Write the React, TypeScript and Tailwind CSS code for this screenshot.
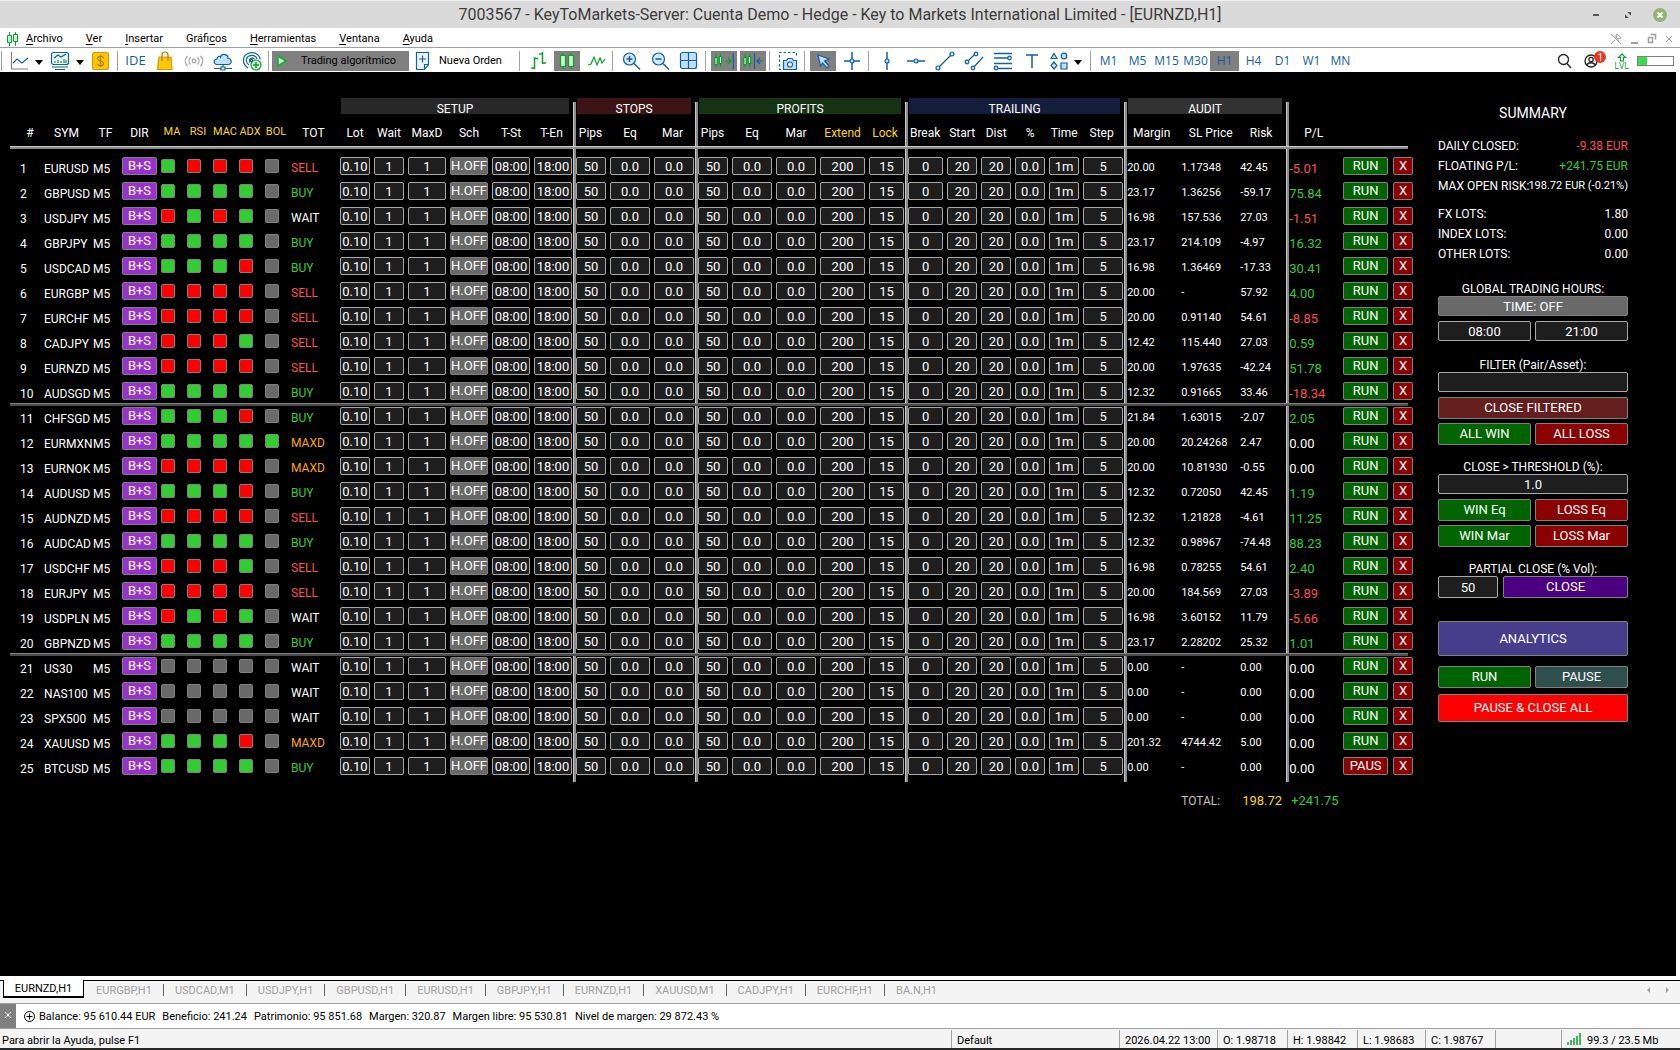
import clsx from "clsx";
import { Fragment, ReactNode } from "react";

type Row = [sym: string, lights: string, total: string, margin: string, sl: string, risk: string, pl: string];

// g = green, r = red, x = no signal (MA, RSI, MAC, ADX, BOL)
const rows: Row[] = [
    ["EURUSD", "grrrx", "SELL", "20.00", "1.17348", "42.45", "-5.01"],
    ["GBPUSD", "ggggx", "BUY", "23.17", "1.36256", "-59.17", "75.84"],
    ["USDJPY", "rgrgx", "WAIT", "16.98", "157.536", "27.03", "-1.51"],
    ["GBPJPY", "ggggx", "BUY", "23.17", "214.109", "-4.97", "16.32"],
    ["USDCAD", "gggrx", "BUY", "16.98", "1.36469", "-17.33", "30.41"],
    ["EURGBP", "rrrrx", "SELL", "20.00", "-", "57.92", "4.00"],
    ["EURCHF", "rrrrx", "SELL", "20.00", "0.91140", "54.61", "-8.85"],
    ["CADJPY", "rrrgx", "SELL", "12.42", "115.440", "27.03", "0.59"],
    ["EURNZD", "rrrrx", "SELL", "20.00", "1.97635", "-42.24", "51.78"],
    ["AUDSGD", "ggggx", "BUY", "12.32", "0.91665", "33.46", "-18.34"],
    ["CHFSGD", "gggrx", "BUY", "21.84", "1.63015", "-2.07", "2.05"],
    ["EURMXN", "ggggg", "MAXD", "20.00", "20.24268", "2.47", "0.00"],
    ["EURNOK", "rrrrx", "MAXD", "20.00", "10.81930", "-0.55", "0.00"],
    ["AUDUSD", "gggrx", "BUY", "12.32", "0.72050", "42.45", "1.19"],
    ["AUDNZD", "rrrrx", "SELL", "12.32", "1.21828", "-4.61", "11.25"],
    ["AUDCAD", "ggggx", "BUY", "12.32", "0.98967", "-74.48", "88.23"],
    ["USDCHF", "rrrgx", "SELL", "16.98", "0.78255", "54.61", "2.40"],
    ["EURJPY", "rrrrx", "SELL", "20.00", "184.569", "27.03", "-3.89"],
    ["USDPLN", "rgrgx", "WAIT", "16.98", "3.60152", "11.79", "-5.66"],
    ["GBPNZD", "ggggx", "BUY", "23.17", "2.28202", "25.32", "1.01"],
    ["US30", "xxxxx", "WAIT", "0.00", "-", "0.00", "0.00"],
    ["NAS100", "xxxxx", "WAIT", "0.00", "-", "0.00", "0.00"],
    ["SPX500", "xxxxx", "WAIT", "0.00", "-", "0.00", "0.00"],
    ["XAUUSD", "gggrx", "MAXD", "201.32", "4744.42", "5.00", "0.00"],
    ["BTCUSD", "ggggx", "BUY", "0.00", "-", "0.00", "0.00"],
];

// One entry for each column: header, column width, header colour, first of a group
const columns: { label: string; col: string; yellow?: boolean; small?: boolean; first?: boolean }[] = [
    { label: "#", col: "w-[34px]" },
    { label: "SYM", col: "w-[49px]" },
    { label: "TF", col: "w-[29px]" },
    { label: "DIR", col: "w-[39px]" },
    { label: "MA", col: "w-[26px]", yellow: true, small: true },
    { label: "RSI", col: "w-[26px]", yellow: true, small: true },
    { label: "MAC", col: "w-[26px]", yellow: true, small: true },
    { label: "ADX", col: "w-[26px]", yellow: true, small: true },
    { label: "BOL", col: "w-[26px]", yellow: true, small: true },
    { label: "TOT", col: "w-[49px]" },
    { label: "Lot", col: "w-[34px]" },
    { label: "Wait", col: "w-[34px]" },
    { label: "MaxD", col: "w-[42px]" },
    { label: "Sch", col: "w-[42px]" },
    { label: "T-St", col: "w-[42px]" },
    { label: "T-En", col: "w-[39px]" },
    { label: "Pips", col: "w-[37px]", first: true },
    { label: "Eq", col: "w-[44px]" },
    { label: "Mar", col: "w-[41px]" },
    { label: "Pips", col: "w-[37px]", first: true },
    { label: "Eq", col: "w-[44px]" },
    { label: "Mar", col: "w-[44px]" },
    { label: "Extend", col: "w-[49px]", yellow: true },
    { label: "Lock", col: "w-[36px]", yellow: true },
    { label: "Break", col: "w-[42px]", first: true },
    { label: "Start", col: "w-[34px]" },
    { label: "Dist", col: "w-[34px]" },
    { label: "%", col: "w-[34px]" },
    { label: "Time", col: "w-[34px]" },
    { label: "Step", col: "w-[41px]" },
    { label: "Margin", col: "w-[57px]", first: true },
    { label: "SL Price", col: "w-[59px]" },
    { label: "Risk", col: "w-[46px]" },
    { label: "P/L", col: "w-[57px]", first: true },
    { label: "", col: "w-[50px]" },
    { label: "", col: "w-[20px]" },
];

const settings: { name: string; value: string; width: string; first?: boolean; toggle?: boolean }[] = [
    { name: "Lot", value: "0.10", width: "w-[30px]" },
    { name: "Wait", value: "1", width: "w-[30px]" },
    { name: "MaxD", value: "1", width: "w-[38px]" },
    { name: "Schedule", value: "H.OFF", width: "w-[38px]", toggle: true },
    { name: "Time start", value: "08:00", width: "w-[38px]" },
    { name: "Time end", value: "18:00", width: "w-[38px]" },
    { name: "Stop pips", value: "50", width: "w-[30px]", first: true },
    { name: "Stop equity", value: "0.0", width: "w-[40px]" },
    { name: "Stop margin", value: "0.0", width: "w-[40px]" },
    { name: "Profit pips", value: "50", width: "w-[30px]", first: true },
    { name: "Profit equity", value: "0.0", width: "w-[40px]" },
    { name: "Profit margin", value: "0.0", width: "w-[40px]" },
    { name: "Extend", value: "200", width: "w-[45px]" },
    { name: "Lock", value: "15", width: "w-[35px]" },
    { name: "Break", value: "0", width: "w-[35px]", first: true },
    { name: "Trailing start", value: "20", width: "w-[30px]" },
    { name: "Distance", value: "20", width: "w-[30px]" },
    { name: "Percent", value: "0.0", width: "w-[30px]" },
    { name: "Time", value: "1m", width: "w-[30px]" },
    { name: "Step", value: "5", width: "w-[40px]" },
];

const bands = [
    { label: "SETUP", span: 6, color: "bg-[#282828]" },
    { label: "STOPS", span: 3, color: "bg-[#3c1414]", first: true },
    { label: "PROFITS", span: 5, color: "bg-[#143214]", first: true },
    { label: "TRAILING", span: 6, color: "bg-[#141e3c]", first: true },
    { label: "AUDIT", span: 3, color: "bg-[#323232]", first: true },
];

const lightColors: Record<string, string> = {
    g: "bg-[#32cd32]",
    r: "bg-[#ff0000]",
    x: "bg-[#696969]",
};

const totalColors: Record<string, string> = {
    BUY: "text-[#32cd32]",
    SELL: "text-[#ff4d4d]",
    MAXD: "text-[#ffa500]",
    WAIT: "text-white",
};

// Vertical rule on the left edge of a column group
const rule =
    "relative before:absolute before:left-0 before:top-0 before:-bottom-1 before:w-[3px] before:border-l before:border-[#c8c8c8] before:bg-[#8c8c8c]";
const headRule =
    "relative before:absolute before:left-0 before:top-1 before:bottom-0 before:w-[3px] before:border-l before:border-[#c8c8c8] before:bg-[#8c8c8c]";

const field = "relative block border border-[#a9a9a9] rounded-[2px] bg-[#1e1e1e] p-0 text-center text-[13px] text-white";
const btn = "relative block border border-[#808080] rounded-[2px] p-0 text-center text-[13px] text-white whitespace-nowrap";

const plColor = (value: string) =>
    value === "0.00" ? "text-white" : value.startsWith("-") ? "text-[#ff4d4d]" : "text-[#32cd32]";

function TitleBar() {
    return (
        <header className="relative flex h-7 items-center justify-center border-t border-[#f0f0f0] bg-[#dadada] text-[16px] text-[#3c3c3c]">
            <h1 className="leading-5">
                7003567 - KeyToMarkets-Server: Cuenta Demo - Hedge - Key to Markets International Limited - [EURNZD,H1]
            </h1>
            <div className="absolute right-3 top-1.5 flex items-center gap-4">
                <button type="button" aria-label="Minimizar" className="flex h-4 w-4 items-center justify-center">
                    <span className="h-0.5 w-1.5 bg-[#555]" />
                </button>
                <button type="button" aria-label="Restaurar" className="flex h-4 w-4 items-center justify-center">
                    <svg width="6" height="6" viewBox="0 0 8 8" fill="#555">
                        <path d="M3 0h5v5zM0 3v5h5z" />
                    </svg>
                </button>
                <button type="button" aria-label="Cerrar" className="h-4 w-4">
                    <svg width="16" height="16" viewBox="0 0 16 16">
                        <circle cx="8" cy="8" r="7" fill="#92b372" />
                        <path d="M5.5 5.5l5 5m0-5l-5 5" stroke="#fff" strokeWidth="2" />
                    </svg>
                </button>
            </div>
        </header>
    );
}

const menu: [string, number][] = [
    ["Archivo", 0],
    ["Ver", 0],
    ["Insertar", 0],
    ["Gráficos", 5],
    ["Herramientas", 0],
    ["Ventana", 0],
    ["Ayuda", 0],
];

function MenuBar() {
    return (
        <nav className="flex h-5 items-center border-b border-[#a0a0a0] bg-white pl-[7px] pr-1.5 pt-[3px] text-[11px] text-black">
            <svg width="12" height="14" viewBox="0 0 12 14" fill="#c8f5cf" stroke="#0ba02c" className="mr-[7px]">
                <path d="M2.5 0v14M8.5 0v14" />
                <path d="M.5 3.5h4v7h-4zM6.5 2.5h4v7h-4z" />
            </svg>
            <div className="flex flex-1 gap-[23px]">
                {menu.map(([label, key]) => (
                    <button key={label} type="button" className="leading-4">
                        {label.slice(0, key)}
                        <span className="underline underline-offset-2">{label[key]}</span>
                        {label.slice(key + 1)}
                    </button>
                ))}
            </div>
            <svg width="64" height="12" viewBox="0 0 64 12" fill="none" stroke="#a0a0a0">
                <path d="M1 1l10 10M1 11l4-4M5 3l4 5M7 1l4 4-3 1-2-3z" />
                <path d="M21 10h7" strokeWidth="2" />
                <path d="M40.5 1.5h5v5M38.5 4.5h4v5h-4z" strokeWidth="1.5" />
                <path d="M56 3l6 6m0-6l-6 6" />
            </svg>
        </nav>
    );
}

function Sep() {
    return <span className="ml-0.5 mr-[3px] h-5 w-px shrink-0 bg-[#a0a0a0]" />;
}

function Tool({ label, active, children }: { label: string; active?: boolean; children: ReactNode }) {
    return (
        <button type="button" aria-label={label} className="flex w-[29px] shrink-0 items-center justify-center">
            <span className={clsx("flex h-5 w-[26px] items-center justify-center", active && "bg-[#808080]")}>
                {children}
            </span>
        </button>
    );
}

function Icon({ children, green, w = 20 }: { children: ReactNode; green?: boolean; w?: number }) {
    return (
        <svg
            width={w}
            height="20"
            viewBox={`0 0 ${w} 20`}
            fill="none"
            stroke={green ? "#0ba02c" : "#13609f"}
            strokeWidth="1.2"
            className="shrink-0"
        >
            {children}
        </svg>
    );
}

function Caret() {
    return (
        <svg width="12" height="20" viewBox="0 0 12 20" className="shrink-0">
            <path d="M2 9h8L6 14z" fill="#000" />
        </svg>
    );
}

const periods = ["M1", "M5", "M15", "M30", "H1", "H4", "D1", "W1", "MN"];

function Toolbar() {
    return (
        <div className="flex h-6 items-center bg-white pt-0.5 font-['Open_Sans',sans-serif] text-[13px] text-[#13609f]">
            <span className="mr-0.5 h-5 w-0.5 shrink-0 border-r border-[#a0a0a0]" />
            <Tool label="Gráfico">
                <Icon>
                    <path d="M2.5 1v17H19" stroke="#808080" />
                    <path d="M4 12l4-4 5 4 6-5" />
                </Icon>
            </Tool>
            <Caret />
            <Tool label="Indicadores">
                <Icon>
                    <rect x="1.5" y="1.5" width="17" height="12" rx="2" fill="#eaf5ff" />
                    <path d="M4 7l4-3 3 2 5-3" />
                    <path d="M5 12v-2m3 2V9m3 3v-2m3 2V8m2 4V9" stroke="#0ba02c" />
                    <path d="M2 16h16M5 18.5h10" />
                </Icon>
            </Tool>
            <Caret />
            <Tool label="Símbolos">
                <Icon>
                    <rect x="1.5" y="1.5" width="16" height="17" rx="2" fill="#ffc800" stroke="#d39a10" />
                    <path
                        d="M12.5 7.5c0-3-6-3-6 0s6 2 6 5-6 3-6 0M9.5 4v12"
                        stroke="#b87a00"
                        strokeWidth="1.2"
                    />
                </Icon>
            </Tool>
            <Sep />
            <button type="button" className="w-[29px] text-center">
                IDE
            </button>
            <Tool label="Mercado">
                <Icon>
                    <path d="M4 6h12l1 12.5H2.5z" fill="#ffc800" stroke="#d39a10" />
                    <path d="M7 10V4c0-4 6-4 6 0v6" stroke="#b87a00" />
                </Icon>
            </Tool>
            <Tool label="Señales">
                <Icon>
                    <g stroke="#a0a0a0">
                        <circle cx="10" cy="10" r="1.8" />
                        <path d="M6.5 6.5c-2 2-2 5 0 7M13.5 6.5c2 2 2 5 0 7M3.5 5c-3 3-3 7 0 10M16.5 5c3 3 3 7 0 10" />
                    </g>
                </Icon>
            </Tool>
            <Tool label="VPS">
                <Icon>
                    <path
                        d="M5 13.5c-5 0-5-5-1-5.5 0-3 3-3 3.5-2 1-4 8-3 7.5 1.5 4 0 4.5 6 0 6z"
                        fill="#bfe0fb"
                    />
                    <path d="M10 13.5V16M1 17.5h7M12 17.5h7M8 16h4v3H8z" />
                </Icon>
            </Tool>
            <Tool label="Comunidad">
                <Icon>
                    <path d="M6 17C0 13 0 5 6 2.5s12 1 12 6M7 14c-4-3-3-8 0-9s7-1 8 3M8 11.5c-2-4 3-6 4.5-3" />
                    <circle cx="9.5" cy="9.5" r="1.2" />
                    <circle cx="14" cy="14" r="5" fill="#d9f8de" stroke="#0ba02c" />
                    <path d="M14 11v6m-3-3h6" stroke="#0ba02c" strokeWidth="1.5" />
                </Icon>
            </Tool>
            <Sep />
            <button
                type="button"
                className="flex h-5 w-[137px] shrink-0 items-center gap-3 bg-[#808080] pl-[3px] font-[Roboto,sans-serif] text-[11px] text-black"
            >
                <svg width="14" height="14" viewBox="0 0 14 14" fill="#c8f5cf" stroke="#0bb02c" strokeWidth="1.5">
                    <path d="M3 2l8 5-8 5z" />
                </svg>
                Trading algorítmico
            </button>
            <button
                type="button"
                className="flex w-[108px] shrink-0 items-center gap-1.5 pl-1 font-[Roboto,sans-serif] text-[11px] text-black"
            >
                <Icon>
                    <path d="M3.5 1.5h12v12l-4 5h-8z" fill="#eaf5ff" />
                    <path d="M15.5 13.5h-4v5M9.5 4.5v7M6 8h7" />
                </Icon>
                Nueva Orden
            </button>
            <Sep />
            <Tool label="Barras">
                <Icon green>
                    <path d="M6.5 6v12M3 17h3.5M6.5 7.5H10M14.5 1v12M11 3h3.5M14.5 12H18" strokeWidth="1.5" />
                </Icon>
            </Tool>
            <Tool label="Velas" active>
                <Icon green>
                    <path d="M6 2v16M14 2v16" />
                    <path d="M3.5 4.5h5v11h-5zM11.5 4.5h5v11h-5z" fill="#c8f5cf" />
                </Icon>
            </Tool>
            <Tool label="Línea">
                <Icon green>
                    <path d="M2 14l3-1 3-7 3 8 3-7 2 5 3-4" />
                </Icon>
            </Tool>
            <Sep />
            {["Acercar", "Alejar"].map((label) => (
                <Tool key={label} label={label}>
                    <Icon>
                        <circle cx="8.5" cy="8" r="6" fill="#cfe8fc" />
                        <path d="M13 12.5l6 6M5.5 8h6" strokeWidth="1.5" />
                        {label === "Acercar" && <path d="M8.5 5v6" strokeWidth="1.5" />}
                    </Icon>
                </Tool>
            ))}
            <Tool label="Mosaico">
                <Icon>
                    <rect x="1.5" y="1.5" width="16" height="16" rx="2" fill="#bfe0fb" />
                    <path d="M9.5 2v15M2 9.5h15" />
                </Icon>
            </Tool>
            <Sep />
            <Tool label="Desplazamiento automático" active>
                <Icon>
                    <g stroke="#0ba02c">
                        <path d="M2 3v13M6.5 3v13M11 10h6M14 7l3 3-3 3" />
                        <path d="M.8 6.5h2.4v7H.8zM5.3 5.5h2.4v7H5.3z" fill="#c8f5cf" />
                    </g>
                    <path d="M19.3 2v16" />
                </Icon>
            </Tool>
            <Tool label="Desplazar gráfico" active>
                <Icon>
                    <g stroke="#0ba02c">
                        <path d="M2 3v13M6.5 3v13" />
                        <path d="M.8 6.5h2.4v7H.8zM5.3 5.5h2.4v7H5.3z" fill="#c8f5cf" />
                    </g>
                    <path d="M11.5 2v16M14 10h6M17 7l-3 3 3 3" />
                </Icon>
            </Tool>
            <Sep />
            <Tool label="Captura">
                <Icon>
                    <path d="M3 18.5H1.5v-17h17V6" strokeDasharray="2.5 2" />
                    <path d="M5.5 9.5h3l1.5-2h4l1.5 2h3v9h-13z" fill="#bfe0fb" />
                    <circle cx="12" cy="13.5" r="2.5" fill="#fff" />
                </Icon>
            </Tool>
            <Sep />
            <Tool label="Cursor" active>
                <Icon>
                    <path d="M5 4l11 4-4.5 2 4.5 5-2 2-4.5-5L7.5 15z" fill="#bfe0fb" />
                </Icon>
            </Tool>
            <Tool label="Cruz">
                <Icon>
                    <path d="M10 1v18M2 10h16" strokeWidth="1.5" />
                    <circle cx="10" cy="10" r="2" fill="#bfe0fb" />
                </Icon>
            </Tool>
            <Sep />
            <Tool label="Línea vertical">
                <Icon>
                    <path d="M10 1v18" strokeWidth="1.5" />
                    <circle cx="10" cy="10" r="2" fill="#bfe0fb" />
                </Icon>
            </Tool>
            <Tool label="Línea horizontal">
                <Icon>
                    <path d="M1 10h18" strokeWidth="1.5" />
                    <circle cx="10" cy="10" r="2" fill="#bfe0fb" />
                </Icon>
            </Tool>
            <Tool label="Línea de tendencia">
                <Icon>
                    <path d="M3 17L17 3" />
                    <circle cx="3" cy="17" r="2" fill="#bfe0fb" />
                    <circle cx="17" cy="3" r="2" fill="#bfe0fb" />
                </Icon>
            </Tool>
            <Tool label="Canal">
                <Icon>
                    <path d="M3 11l9-9M9 17L19 6" />
                    <circle cx="3" cy="11" r="1.8" fill="#bfe0fb" />
                    <circle cx="12" cy="3" r="1.8" fill="#bfe0fb" />
                    <circle cx="9" cy="17" r="1.8" fill="#bfe0fb" />
                </Icon>
            </Tool>
            <Tool label="Fibonacci">
                <Icon>
                    <path d="M1 2.5h18M1 7h14M1 12.5h18M5 17.5h14" strokeWidth="1.5" />
                    <circle cx="16.5" cy="7" r="1.8" fill="#bfe0fb" />
                    <circle cx="3" cy="17" r="1.8" fill="#bfe0fb" />
                </Icon>
            </Tool>
            <Tool label="Texto">
                <Icon>
                    <path d="M4 4h12M10 4v13" strokeWidth="1.5" />
                </Icon>
            </Tool>
            <button type="button" aria-label="Objetos" className="flex w-[42px] shrink-0 items-center gap-1 pl-1">
                <Icon w={18}>
                    <path d="M4 2.5l3 5H1zM1 14.5l3-3.500 3 3.500L4 18zM11 12h6v6h-6z" fill="#bfe0fb" />
                    <circle cx="14" cy="5" r="2.8" fill="#bfe0fb" />
                </Icon>
                <Caret />
            </button>
            <Sep />
            {periods.map((period) => (
                <button
                    key={period}
                    type="button"
                    className={clsx("h-5 w-[29px] shrink-0 text-[12px]", period === "H1" && "bg-[#808080]")}
                >
                    {period}
                </button>
            ))}
            <div className="ml-auto flex items-center gap-3 pr-1.5">
                <button type="button" aria-label="Buscar">
                    <svg width="15" height="16" viewBox="0 0 15 16" fill="none" stroke="#222" strokeWidth="1.3">
                        <circle cx="6.5" cy="6.5" r="5" />
                        <path d="M10 10.5l4 4.5" />
                    </svg>
                </button>
                <button type="button" aria-label="Perfil" className="relative">
                    <svg width="22" height="16" viewBox="0 0 22 16" fill="none" stroke="#222" strokeWidth="1.3">
                        <circle cx="7" cy="8" r="6" />
                        <circle cx="7" cy="6.5" r="2.2" />
                        <path d="M3 12c1-3 7-3 8 0" />
                    </svg>
                    <span className="absolute -top-0.5 right-0 h-3 w-3 rounded-full bg-[#e03a20] text-center text-[10px] leading-3 text-white">
                        1
                    </span>
                </button>
                <div className="-ml-1 flex flex-col items-center text-[9px] leading-2 text-[#0ba02c]">
                    <svg width="10" height="9" viewBox="0 0 10 9" fill="none" stroke="#0ba02c" strokeWidth="1.2">
                        <path d="M5 1l3.5 3.5h-2V8h-3V4.5h-2z" />
                    </svg>
                    LVL
                </div>
                <div className="-ml-1 h-2.5 w-[37px] border border-[#808080] bg-white">
                    <div className="h-full w-[9px] bg-[#3cdc46]" />
                </div>
            </div>
        </div>
    );
}

function SignalTable() {
    return (
        <table className="w-[1403px] shrink-0 table-fixed border-separate border-spacing-0 self-start text-white">
            <colgroup>
                {columns.map((c, i) => (
                    <col key={i} className={c.col} />
                ))}
            </colgroup>
            <thead className="text-[12px]">
                <tr className="h-4">
                    <td colSpan={10} />
                    {bands.map((band) => (
                        <th
                            key={band.label}
                            colSpan={band.span}
                            className={clsx("p-0 pr-1 font-normal", band.first ? ["pl-1", headRule] : "pl-px")}
                        >
                            <div className={clsx("h-4 leading-[22px]", band.color)}>{band.label}</div>
                        </th>
                    ))}
                    <td colSpan={3} className={headRule} />
                </tr>
                <tr className="relative h-[39px] after:absolute after:bottom-1 after:left-0 after:right-[5px] after:h-[3px] after:border-t after:border-[#c8c8c8] after:bg-[#8c8c8c]">
                    {columns.map((c, i) => (
                        <th
                            key={i}
                            className={clsx(
                                "whitespace-nowrap p-0 pb-0.5 font-normal",
                                i === 0 && "pl-2.5",
                                i !== 31 && !c.first && "pr-1",
                                c.first && "pr-0.5",
                                c.yellow && "text-[#ffd700]",
                                c.small && "text-[11px]",
                                c.first && rule
                            )}
                        >
                            {c.label}
                        </th>
                    ))}
                </tr>
            </thead>
            <tbody>
                {rows.map(([sym, lights, total, margin, sl, risk, pl], index) => (
                    <tr
                        key={sym}
                        className={clsx(
                            "relative h-[25px] align-top leading-[18px]",
                            (index === 10 || index === 20) &&
                                "after:absolute after:left-0 after:right-[5px] after:top-0 after:h-[3px] after:border-t after:border-[#808080] after:bg-[#4b4b4b]"
                        )}
                    >
                        <td className="p-0 pl-2.5 pt-[7px] text-[12px]">{index + 1}</td>
                        <td className="whitespace-nowrap p-0 pt-[7px] text-[12px]">{sym}</td>
                        <td className="p-0 pt-[7px] text-[12px]">M5</td>
                        <td className="p-0 pt-1">
                            <button type="button" className={clsx(btn, "h-[18px] w-[35px] bg-[#9932cc] leading-4")}>
                                B+S
                            </button>
                        </td>
                        {lights.split("").map((light, i) => (
                            <td key={i} className="p-0 pt-1.5">
                                <span
                                    className={clsx(
                                        "block h-3.5 w-3.5 rounded-[2px] border border-[#808080]",
                                        lightColors[light]
                                    )}
                                />
                            </td>
                        ))}
                        <td className={clsx("p-0 pt-1.5 text-[12px]", totalColors[total])}>{total}</td>
                        {settings.map((s) => (
                            <td key={s.name} className={clsx("p-0 pt-1", s.first && ["pl-[3px]", rule])}>
                                {s.toggle ? (
                                    <button
                                        type="button"
                                        className={clsx(btn, s.width, "h-[18px] bg-[#696969] leading-4")}
                                    >
                                        {s.value}
                                    </button>
                                ) : (
                                    <input
                                        aria-label={`${sym} ${s.name}`}
                                        defaultValue={s.value}
                                        className={clsx(field, s.width, "h-[18px] leading-4")}
                                    />
                                )}
                            </td>
                        ))}
                        <td className={clsx("p-0 pl-[3px] pt-1.5 text-[11px]", rule)}>{margin}</td>
                        <td className="p-0 pt-1.5 text-[11px]">{sl}</td>
                        <td className="p-0 pt-1.5 text-[11px]">{risk}</td>
                        <td className={clsx("p-0 pl-[3px] pt-[7px] text-[13px]", rule, plColor(pl))}>{pl}</td>
                        <td className="p-0 pt-1">
                            <button
                                type="button"
                                className={clsx(
                                    btn,
                                    "h-[18px] w-[45px] leading-4",
                                    sym === "BTCUSD" ? "bg-[#8b0000]" : "bg-[#006400]"
                                )}
                            >
                                {sym === "BTCUSD" ? "PAUS" : "RUN"}
                            </button>
                        </td>
                        <td className="p-0 pt-1">
                            <button type="button" className={clsx(btn, "h-[18px] w-5 bg-[#8b0000] leading-4")}>
                                X
                            </button>
                        </td>
                    </tr>
                ))}
            </tbody>
            <tfoot>
                <tr className="h-[46px] text-[13px]">
                    <td colSpan={31} />
                    <td className="p-0 text-[12px] text-[#c0c0c0]">TOTAL:</td>
                    <td className="p-0 pl-0.5 text-[#ffd700]">198.72</td>
                    <td className="p-0 pl-[5px] text-[#32cd32]">+241.75</td>
                    <td colSpan={2} />
                </tr>
            </tfoot>
        </table>
    );
}

const half = "flex-1 h-[22px]";

function Summary() {
    return (
        <aside className="mr-12 w-[190px] text-[12px] text-white">
            <h2 className="pt-[5px] text-center text-[14px] leading-5">SUMMARY</h2>
            <dl className="mt-[13px] leading-5">
                {[
                    ["DAILY CLOSED:", "-9.38 EUR", "text-[#ff4d4d]"],
                    ["FLOATING P/L:", "+241.75 EUR", "text-[#32cd32]"],
                    ["MAX OPEN RISK:", "198.72 EUR (-0.21%)", "text-[11px]"],
                    ["FX LOTS:", "1.80", ""],
                    ["INDEX LOTS:", "0.00", ""],
                    ["OTHER LOTS:", "0.00", ""],
                ].map(([label, value, color], i) => (
                    <div key={label} className={clsx("flex justify-between whitespace-nowrap", i === 3 && "mt-2")}>
                        <dt className="w-0">{label}</dt>
                        <dd className={color}>{value}</dd>
                    </div>
                ))}
            </dl>

            <h3 className="mt-4 h-4 text-center leading-[18px]">GLOBAL TRADING HOURS:</h3>
            <button type="button" className={clsx(btn, "h-5 w-full bg-[#696969] leading-[19px]")}>
                TIME: OFF
            </button>
            <div className="mt-[5px] flex gap-1">
                <input aria-label="Start" defaultValue="08:00" className={clsx(field, "h-5 w-0 flex-1")} />
                <input aria-label="End" defaultValue="21:00" className={clsx(field, "h-5 w-0 flex-1")} />
            </div>

            <label htmlFor="filter" className="mt-[15px] block h-4 text-center leading-[18px]">
                FILTER (Pair/Asset):
            </label>
            <input id="filter" className={clsx(field, "h-5 w-full")} />
            <button type="button" className={clsx(btn, "mt-[5px] h-[22px] w-full bg-[#641e1e]")}>
                CLOSE FILTERED
            </button>
            <div className="mt-1 flex gap-1">
                <button type="button" className={clsx(btn, half, "bg-[#006400]")}>
                    ALL WIN
                </button>
                <button type="button" className={clsx(btn, half, "bg-[#8b0000]")}>
                    ALL LOSS
                </button>
            </div>

            <label htmlFor="threshold" className="mt-[13px] block h-4 text-center leading-[18px]">
                CLOSE &gt; THRESHOLD (%):
            </label>
            <input id="threshold" defaultValue="1.0" className={clsx(field, "h-5 w-full")} />
            <div className="mt-[5px] grid grid-cols-2 gap-1">
                <button type="button" className={clsx(btn, "h-[22px] bg-[#006400]")}>
                    WIN Eq
                </button>
                <button type="button" className={clsx(btn, "h-[22px] bg-[#8b0000]")}>
                    LOSS Eq
                </button>
                <button type="button" className={clsx(btn, "h-[22px] bg-[#006400]")}>
                    WIN Mar
                </button>
                <button type="button" className={clsx(btn, "h-[22px] bg-[#8b0000]")}>
                    LOSS Mar
                </button>
            </div>

            <label htmlFor="partial" className="mt-[13px] block h-4 text-center leading-[18px]">
                PARTIAL CLOSE (% Vol):
            </label>
            <div className="flex gap-[5px]">
                <input id="partial" defaultValue="50" className={clsx(field, "h-[22px] w-[60px]")} />
                <button type="button" className={clsx(btn, half, "bg-[#4b0082]")}>
                    CLOSE
                </button>
            </div>

            <button type="button" className={clsx(btn, "mt-[23px] h-[35px] w-full bg-[#483d8b]")}>
                ANALYTICS
            </button>
            <div className="mt-2.5 flex gap-1">
                <button type="button" className={clsx(btn, half, "bg-[#006400]")}>
                    RUN
                </button>
                <button type="button" className={clsx(btn, half, "bg-[#2f4f4f]")}>
                    PAUSE
                </button>
            </div>
            <button type="button" className={clsx(btn, "mt-1.5 h-7 w-full bg-[#ff0000]")}>
                PAUSE &amp; CLOSE ALL
            </button>
        </aside>
    );
}

const tabs = [
    "EURGBP,H1",
    "USDCAD,M1",
    "USDJPY,H1",
    "GBPUSD,H1",
    "EURUSD,H1",
    "GBPJPY,H1",
    "EURNZD,H1",
    "XAUUSD,M1",
    "CADJPY,H1",
    "EURCHF,H1",
    "BA.N,H1",
];

function ChartTabs() {
    return (
        <div className="flex h-6 items-start border-b border-t border-b-[#a0a0a0] border-t-black bg-[#f4f4f4] text-[11px] text-[#a0a0a0]">
            <button
                type="button"
                className="-mt-px ml-[3px] mr-px h-[18px] w-[81px] border border-b-2 border-t-0 border-black bg-white leading-[18px] text-black"
            >
                EURNZD,H1
            </button>
            {tabs.map((tab, i) => (
                <Fragment key={i}>
                    {i > 0 && <span className="mt-[3px] h-3 w-px bg-[#606060]" />}
                    <button type="button" className="px-[11px] leading-5">
                        {tab}
                    </button>
                </Fragment>
            ))}
            <svg width="24" height="10" viewBox="0 0 24 10" fill="#a0a0a0" className="ml-auto mr-2.5 mt-1">
                <path d="M4 2v6L1 5zM20 2v6l3-3z" />
            </svg>
        </div>
    );
}

function AccountBar() {
    return (
        <div className="flex h-[25px] items-center border-b border-[#a0a0a0] bg-white text-[11px] text-black">
            <button
                type="button"
                aria-label="Cerrar panel"
                className="flex h-full w-4 justify-center bg-[#808080] pt-[7px]"
            >
                <svg width="8" height="8" viewBox="0 0 8 8" stroke="#fff">
                    <path d="M1 1l6 6m0-6L1 7" />
                </svg>
            </button>
            <svg width="11" height="11" viewBox="0 0 11 11" fill="none" stroke="#000" className="ml-2 mr-1">
                <circle cx="5.5" cy="5.5" r="5" />
                <path d="M5.5 2.5v6m-3-3h6" />
            </svg>
            <p className="flex gap-[7px] whitespace-nowrap pt-[3px]">
                <span>Balance: 95 610.44 EUR</span>
                <span>Beneficio: 241.24</span>
                <span>Patrimonio: 95 851.68</span>
                <span>Margen: 320.87</span>
                <span>Margen libre: 95 530.81</span>
                <span>Nivel de margen: 29 872.43 %</span>
            </p>
        </div>
    );
}

const cell = "border-l border-[#a0a0a0] pl-[5px] h-[18px] leading-[22px] whitespace-nowrap";

function StatusBar() {
    return (
        <footer className="flex h-[21px] items-start border-b-2 border-[#282828] bg-[#f4f4f4] pt-px text-[11px] text-black">
            <span className="h-[18px] flex-1 pl-0.5 leading-[22px]">Para abrir la Ayuda, pulse F1</span>
            <span className={clsx(cell, "w-[168px]")}>Default</span>
            <span className={clsx(cell, "w-[98px]")}>2026.04.22 13:00</span>
            <span className={clsx(cell, "w-[70px]")}>O: 1.98718</span>
            <span className={clsx(cell, "w-[70px]")}>H: 1.98842</span>
            <span className={clsx(cell, "w-[68px]")}>L: 1.98683</span>
            <span className={clsx(cell, "w-[70px]")}>C: 1.98767</span>
            <span className={clsx(cell, "w-[66px]")} />
            <span className={clsx(cell, "flex w-[119px] gap-1.5")}>
                <svg width="14" height="12" viewBox="0 0 14 12" stroke="#0ba02c" strokeWidth="1.5" className="mt-[3px]">
                    <path d="M1 9v3M4 7v5M7 5v7M10 3v9M13 0v12" />
                </svg>
                99.3 / 23.5 Mb
            </span>
        </footer>
    );
}

export default function App() {
    return (
        <div className="flex min-h-screen flex-col bg-white font-[Roboto,sans-serif]">
            <TitleBar />
            <MenuBar />
            <Toolbar />
            <main className="mb-1 mr-1 flex flex-1 justify-between bg-black pl-2.5 pt-[26px]">
                <SignalTable />
                <Summary />
            </main>
            <ChartTabs />
            <AccountBar />
            <StatusBar />
        </div>
    );
}
